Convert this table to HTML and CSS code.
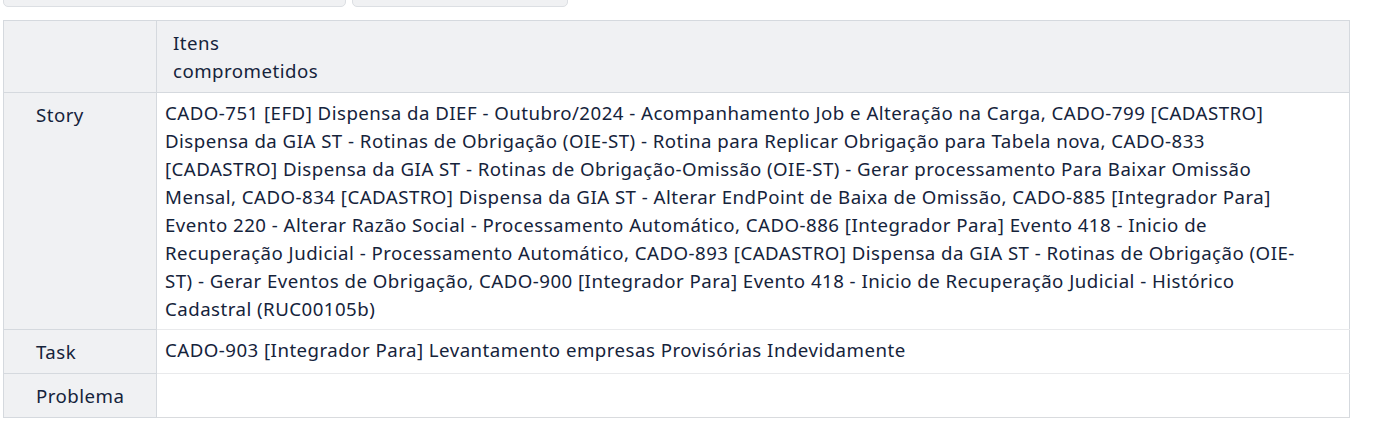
FILE: index.html
```html
<!DOCTYPE html>
<html lang="pt-BR">
<head>
<meta charset="utf-8">
<title>Itens comprometidos</title>
<link rel="stylesheet" href="styles.css">
</head>
<body>
  <div class="toolbar">
    <button class="tb-btn tb-wide" type="button"></button>
    <button class="tb-btn tb-narrow" type="button"></button>
  </div>
  <table class="items">
    <thead>
      <tr>
        <th class="corner"></th>
        <th class="head"><span class="head-text">Itens comprometidos</span></th>
      </tr>
    </thead>
    <tbody>
      <tr>
        <th class="label">Story</th>
        <td class="value">CADO-751 [EFD] Dispensa da DIEF - Outubro/2024 - Acompanhamento Job e Alteração na Carga, CADO-799 [CADASTRO]<br>Dispensa da GIA ST - Rotinas de Obrigação (OIE-ST) - Rotina para Replicar Obrigação para Tabela nova, CADO-833<br>[CADASTRO] Dispensa da GIA ST - Rotinas de Obrigação-Omissão (OIE-ST) - Gerar processamento Para Baixar Omissão<br>Mensal, CADO-834 [CADASTRO] Dispensa da GIA ST - Alterar EndPoint de Baixa de Omissão, CADO-885 [Integrador Para]<br>Evento 220 - Alterar Razão Social - Processamento Automático, CADO-886 [Integrador Para] Evento 418 - Inicio de<br>Recuperação Judicial - Processamento Automático, CADO-893 [CADASTRO] Dispensa da GIA ST - Rotinas de Obrigação (OIE-<br>ST) - Gerar Eventos de Obrigação, CADO-900 [Integrador Para] Evento 418 - Inicio de Recuperação Judicial - Histórico<br>Cadastral (RUC00105b)</td>
      </tr>
      <tr>
        <th class="label">Task</th>
        <td class="value">CADO-903 [Integrador Para] Levantamento empresas Provisórias Indevidamente</td>
      </tr>
      <tr class="last">
        <th class="label">Problema</th>
        <td class="value"></td>
      </tr>
    </tbody>
  </table>
</body>
</html>
```

FILE: styles.css
```css
html, body {
  margin: 0;
  padding: 0;
  background: #ffffff;
}

body {
  padding: 0 3px;
  font-family: "Noto Sans", "Open Sans", sans-serif;
  font-size: 18.67px;
  letter-spacing: 0.47px;
  line-height: 28px;
  color: #15233b;
}

.toolbar {
  display: flex;
  gap: 6px;
  margin-top: -30px;
}

.tb-btn {
  height: 37px;
  background: #f0f1f3;
  border: 1px solid #dcdfe3;
  border-radius: 5px;
  padding: 0;
}

.tb-wide { width: 343px; }
.tb-narrow { width: 216px; }

.items {
  margin-top: 13px;
  width: 1347px;
  border-collapse: collapse;
  border: 1px solid #d5d9de;
}

.items th {
  font-weight: normal;
  text-align: left;
  vertical-align: top;
  background: #f0f1f3;
  border: 1px solid #d5d9de;
}

.corner {
  width: 153px;
  padding: 0;
  box-sizing: border-box;
}

.items .head {
  padding: 8px 16px 7px;
}

.head-text {
  display: block;
  max-width: 150px;
}

.items .label {
  width: 153px;
  box-sizing: border-box;
  padding: 8px 10px 7px 32px;
}

.value {
  padding: 6px 8px 6px 8px;
  vertical-align: top;
  border-top: 1px solid #e9eaec;
  border-bottom: 1px solid #e9eaec;
  border-right: 1px solid #d5d9de;
}

.last .value {
  border-bottom: 1px solid #d9dbde;
}
```
